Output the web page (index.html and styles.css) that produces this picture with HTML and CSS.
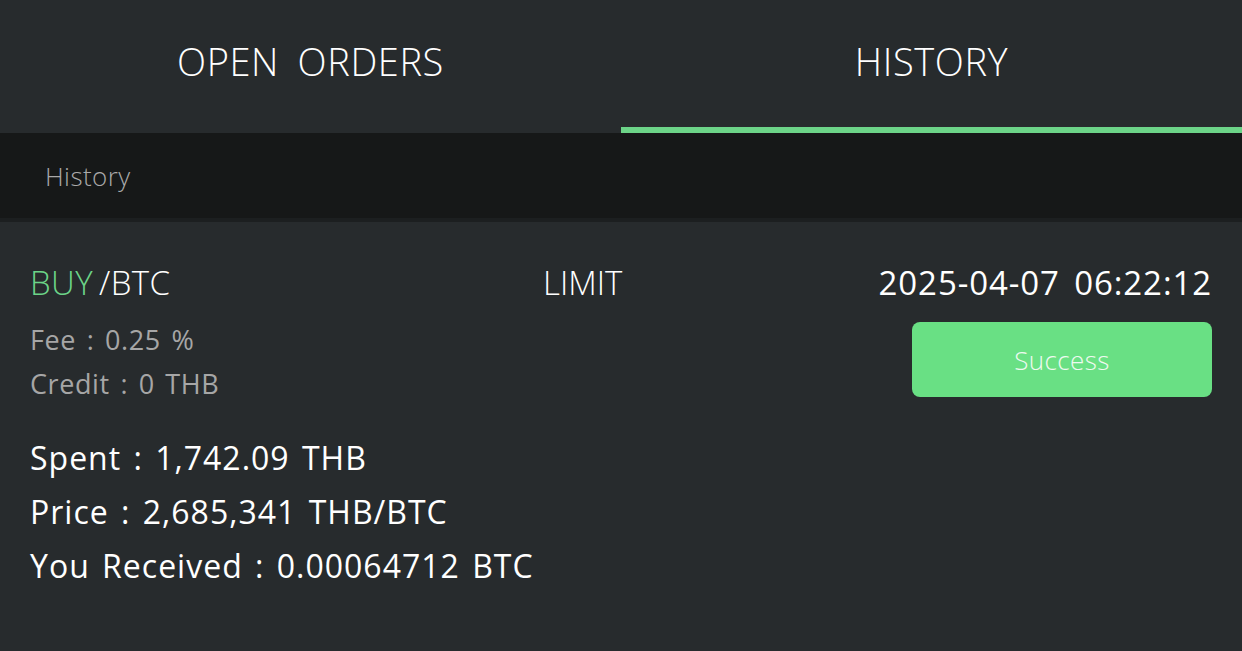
FILE: index.html
```html
<!DOCTYPE html>
<html>
<head>
<meta charset="utf-8">
<title>History</title>
<link rel="stylesheet" href="styles.css">
</head>
<body>
<div class="tabs">
  <div class="tab">OPEN ORDERS</div>
  <div class="tab active">HISTORY</div>
</div>
<div class="strip">History</div>
<div class="order">
  <div class="order-top">
    <div class="pair"><span class="side">BUY</span>/BTC</div>
    <div class="type">LIMIT</div>
    <div class="date">2025-04-07 06:22:12</div>
  </div>
  <div class="order-mid">
    <div class="meta">
      <div class="meta-line">Fee : 0.25 %</div>
      <div class="meta-line">Credit : 0 THB</div>
    </div>
    <div class="status">Success</div>
  </div>
  <div class="totals">
    <div class="total-line">Spent : 1,742.09 THB</div>
    <div class="total-line">Price : 2,685,341 THB/BTC</div>
    <div class="total-line">You Received : 0.00064712 BTC</div>
  </div>
</div>
</body>
</html>
```

FILE: styles.css
```css
body {
  margin: 0;
  background: #272b2d;
  color: #fff;
  font-family: 'Open Sans', 'Noto Sans', sans-serif;
  height: 651px;
  overflow: hidden;
}
.tabs {
  display: flex;
  height: 133px;
  background: #272b2d;
}
.tab {
  flex: 1;
  display: flex;
  align-items: center;
  justify-content: center;
  padding-bottom: 6px;
  box-sizing: border-box;
  font-size: 38px;
  font-weight: 300;
  letter-spacing: 0.6px;
  word-spacing: 8px;
  border-bottom: 6px solid transparent;
}
.tab.active {
  border-bottom-color: #6cd488;
}
.strip {
  height: 89px;
  box-sizing: border-box;
  padding: 0 45px;
  display: flex;
  align-items: center;
  background: #161818;
  border-bottom: 4px solid #1c1f20;
  color: #a9a9a9;
  font-size: 26px;
  font-weight: 300;
  letter-spacing: 0.4px;
}
.order {
  padding: 38px 30px 0 30px;
}
.order-top {
  display: flex;
  align-items: center;
  height: 44px;
  font-size: 33px;
}
.pair {
  width: 513px;
  font-weight: 300;
  letter-spacing: 0.4px;
}
.side {
  color: #6cd488;
  margin-right: 6px;
}
.type {
  flex: 1;
  font-weight: 300;
}
.date {
  font-weight: 500;
  letter-spacing: 0.9px;
  word-spacing: 5px;
}
.order-mid {
  display: flex;
  justify-content: space-between;
  align-items: flex-start;
}
.meta {
  padding-top: 14px;
}
.meta-line {
  font-size: 27px;
  line-height: 44px;
  color: #a6a6a6;
  letter-spacing: 0.6px;
  word-spacing: 3px;
}
.status {
  margin-top: 18px;
  width: 300px;
  height: 75px;
  border-radius: 8px;
  background: #69e084;
  color: #eefaf0;
  display: flex;
  align-items: center;
  justify-content: center;
  font-size: 26px;
  font-weight: 300;
  letter-spacing: 0.4px;
}
.totals {
  padding-top: 25px;
}
.total-line {
  font-size: 32px;
  font-weight: 500;
  line-height: 54px;
  letter-spacing: 1px;
  word-spacing: 3px;
}
```
